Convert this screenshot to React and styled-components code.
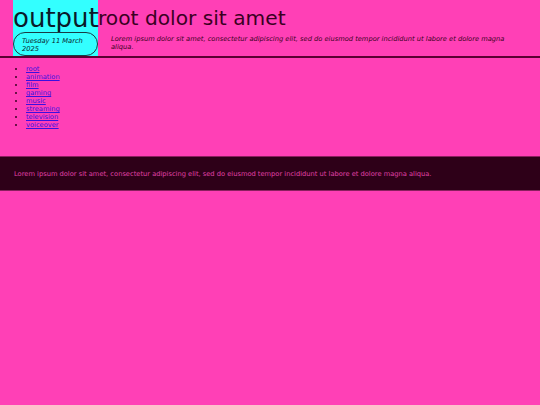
import styled, { createGlobalStyle } from "styled-components";

const GlobalStyle = createGlobalStyle`
    html, body {
        margin: 0;
        padding: 0;
        min-height: 100%;
        background: #ff40b6;
    }
    body {
        font-family: "DejaVu Sans", Verdana, sans-serif;
        color: #3a0022;
    }
`;

const Header = styled.header`
    display: flex;
    padding: 0 13px;
    border-bottom: 2px solid #5a0032;
`;

const Brand = styled.div`
    display: flex;
    flex-direction: column;
    background: #33ffff;
    width: 85px;
    flex-shrink: 0;
`;

const Logo = styled.div`
    font-size: 26px;
    line-height: 28px;
    padding-top: 4px;
    color: #0a1a2a;
    white-space: nowrap;
`;

const DatePill = styled.div`
    border: 1px solid #1a3a44;
    border-radius: 12px;
    padding: 4px 8px 2px;
    font-size: 6.7px;
    line-height: 8px;
    font-style: italic;
    color: #0a1a2a;
`;

const Intro = styled.div`
    flex: 1;
`;

const Title = styled.h1`
    margin: 6px 0 0;
    font-size: 20.2px;
    line-height: 24px;
    font-weight: 400;
    color: #3a0022;
`;

const Lead = styled.p`
    margin: 6px 18px 0 13px;
    font-size: 6.7px;
    line-height: 7.5px;
    font-style: italic;
`;

const Nav = styled.ul`
    margin: 7px 0 0;
    padding-left: 26px;
    font-size: 6.7px;
    line-height: 8px;
`;

const NavLink = styled.a`
    color: #3a10e0;
`;

const Footer = styled.footer`
    margin-top: 27px;
    background: #2e0018;
    border-top: 1px solid #8a1f5e;
    border-bottom: 1px solid #8a1f5e;
    padding: 13px 14px 11px;
    font-size: 6.7px;
    line-height: 9px;
    color: #e040a8;
`;

const links = ["root", "animation", "film", "gaming", "music", "streaming", "television", "voiceover"];

const App = () => {
    return (
        <>
            <GlobalStyle />
            <Header>
                <Brand>
                    <Logo>output</Logo>
                    <DatePill>Tuesday 11 March 2025</DatePill>
                </Brand>
                <Intro>
                    <Title>root dolor sit amet</Title>
                    <Lead>
                        Lorem ipsum dolor sit amet, consectetur adipiscing elit, sed do eiusmod tempor incididunt ut labore et dolore magna aliqua.
                    </Lead>
                </Intro>
            </Header>
            <Nav>
                {links.map((l) => (
                    <li key={l}>
                        <NavLink href={"#" + l}>{l}</NavLink>
                    </li>
                ))}
            </Nav>
            <Footer>
                Lorem ipsum dolor sit amet, consectetur adipiscing elit, sed do eiusmod tempor incididunt ut labore et dolore magna aliqua.
            </Footer>
        </>
    );
};

export default App;
